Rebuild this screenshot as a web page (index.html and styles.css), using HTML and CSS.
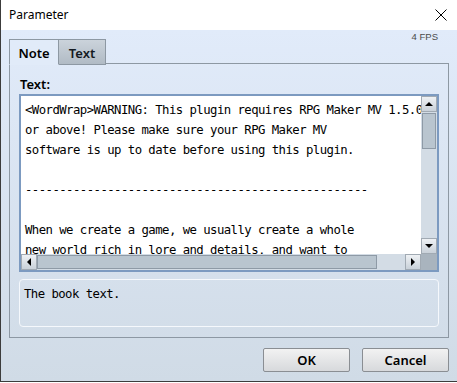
FILE: index.html
```html
<!DOCTYPE html>
<html lang="en">
<head>
    <meta charset="UTF-8">
    <title>Parameter</title>
    <link rel="stylesheet" href="styles.css">
</head>
<body>
    <div class="window">
        <div class="titlebar">
            <span class="title">Parameter</span>
            <svg class="close" width="12" height="12" viewBox="0 0 12 12">
                <path d="M0.5 0.5 L11.5 11.5 M11.5 0.5 L0.5 11.5" stroke="#000" stroke-width="1" fill="none"/>
            </svg>
        </div>

        <div class="content">
            <span class="fps">4 FPS</span>

            <div class="tabs">
                <div class="tab active">Note</div>
                <div class="tab">Text</div>
            </div>

            <div class="panel">
                <div class="label">Text:</div>

                <div class="editor">
                    <div class="editor-text">&lt;WordWrap&gt;WARNING: This plugin requires RPG Maker MV 1.5.0
or above! Please make sure your RPG Maker MV
software is up to date before using this plugin.

--------------------------------------------------

When we create a game, we usually create a whole
new world rich in lore and details, and want to
share it with the player.</div>

                    <div class="vscroll">
                        <div class="sb-btn"><span class="arrow up"></span></div>
                        <div class="sb-thumb v"></div>
                        <div class="sb-track"></div>
                        <div class="sb-btn"><span class="arrow down"></span></div>
                    </div>

                    <div class="hscroll">
                        <div class="sb-btn"><span class="arrow left"></span></div>
                        <div class="sb-thumb h"></div>
                        <div class="sb-track"></div>
                        <div class="sb-btn"><span class="arrow right"></span></div>
                    </div>

                    <div class="sb-corner"></div>
                </div>

                <div class="description">The book text.</div>
            </div>

            <div class="buttons">
                <button>OK</button>
                <button>Cancel</button>
            </div>
        </div>
    </div>
</body>
</html>
```

FILE: styles.css
```css
html, body {
    margin: 0;
    padding: 0;
    background: #ffffff;
}
.window {
    width: 456px;
    height: 381px;
    border-left: 1px solid #3c3c3c;
    border-bottom: 1px solid #3c3c3c;
    display: flex;
    flex-direction: column;
    font-family: "Noto Sans", "Open Sans", sans-serif;
    color: #000;
}
.titlebar {
    height: 30px;
    background: #ffffff;
    display: flex;
    align-items: center;
    justify-content: space-between;
    padding: 0 10px 0 8px;
    flex-shrink: 0;
}
.title {
    font-size: 12px;
    margin-top: -1px;
}
.close {
    display: block;
    margin-top: -1px;
}
.content {
    position: relative;
    flex: 1;
    background: linear-gradient(#e1ebfa, #d0dbe6);
    padding: 9px 8px 0 8px;
}
.fps {
    position: absolute;
    top: 2px;
    right: 19px;
    font-family: "Liberation Sans", sans-serif;
    font-size: 9.5px;
    line-height: 10px;
    color: #4a4a4a;
}
.tabs {
    display: flex;
    height: 25px;
    margin-bottom: -1px;
    position: relative;
    z-index: 1;
}
.tab {
    box-sizing: border-box;
    height: 26px;
    border: 1px solid #8d98a3;
    font-size: 13px;
    font-weight: 600;
    padding: 4px 0 0 0;
    text-align: center;
}
.tab.active {
    width: 50px;
    background: #e1ebf9;
    border-bottom-color: #e1ebf9;
}
.tab + .tab {
    width: 47px;
    border-left: none;
    background: linear-gradient(#cbd3db, #b1bbc5);
    color: #141a22;
}
.panel {
    box-sizing: border-box;
    height: 275px;
    border: 1px solid #8d98a3;
    padding: 12px 9px 0 9px;
    display: flex;
    flex-direction: column;
}
.label {
    font-size: 13px;
    font-weight: 600;
    line-height: 16px;
    padding-left: 1px;
    margin-bottom: 2px;
}
.editor {
    box-sizing: border-box;
    height: 178px;
    flex-shrink: 0;
    border: 2px solid #7c9ac0;
    background: #ffffff;
    display: grid;
    grid-template-columns: 1fr 16px;
    grid-template-rows: 1fr 16px;
}
.editor-text {
    overflow: hidden;
    white-space: pre;
    font-family: "DejaVu Sans Mono", monospace;
    font-size: 12.3px;
    letter-spacing: -0.55px;
    line-height: 20px;
    padding: 4px 0 0 4px;
    min-width: 0;
}
.vscroll, .hscroll {
    display: flex;
    background: #d3dce5;
}
.vscroll {
    flex-direction: column;
}
.sb-btn {
    box-sizing: border-box;
    width: 16px;
    height: 16px;
    flex-shrink: 0;
    background: linear-gradient(#eef1f4, #c9d1d9);
    border: 1px solid #a1aab3;
    display: flex;
    align-items: center;
    justify-content: center;
}
.sb-track {
    flex: 1;
}
.sb-thumb {
    box-sizing: border-box;
    background: #b9c5cf;
    border: 1px solid #8e9aa6;
    flex-shrink: 0;
}
.sb-thumb.v {
    height: 36px;
    margin: 1px 1px 0 1px;
}
.sb-thumb.h {
    width: 340px;
    margin: 1px 0 1px 0;
}
.sb-corner {
    background: #a9b4be;
}
.arrow {
    width: 0;
    height: 0;
    border: 4px solid transparent;
}
.arrow.up {
    border-bottom: 4px solid #000;
    border-top-width: 0;
    margin-top: -1px;
}
.arrow.down {
    border-top: 4px solid #000;
    border-bottom-width: 0;
}
.arrow.left {
    border-right: 4px solid #000;
    border-left-width: 0;
}
.arrow.right {
    border-left: 4px solid #000;
    border-right-width: 0;
}
.description {
    box-sizing: border-box;
    height: 48px;
    flex-shrink: 0;
    margin-top: 7px;
    border: 1px solid #f5f8fc;
    border-radius: 4px;
    font-family: "DejaVu Sans Mono", monospace;
    font-size: 12.3px;
    letter-spacing: -0.55px;
    line-height: 20px;
    padding: 4px 0 0 4px;
}
.buttons {
    display: flex;
    justify-content: flex-end;
    gap: 12px;
    margin-top: 10px;
}
.buttons button {
    width: 87px;
    height: 24px;
    border: 1px solid #8a8e93;
    border-radius: 2px;
    background: linear-gradient(#f2f2f2, #d7d9dc);
    font-family: "Noto Sans", "Open Sans", sans-serif;
    font-size: 13px;
    font-weight: 600;
    color: #000;
    padding: 0;
}
```
